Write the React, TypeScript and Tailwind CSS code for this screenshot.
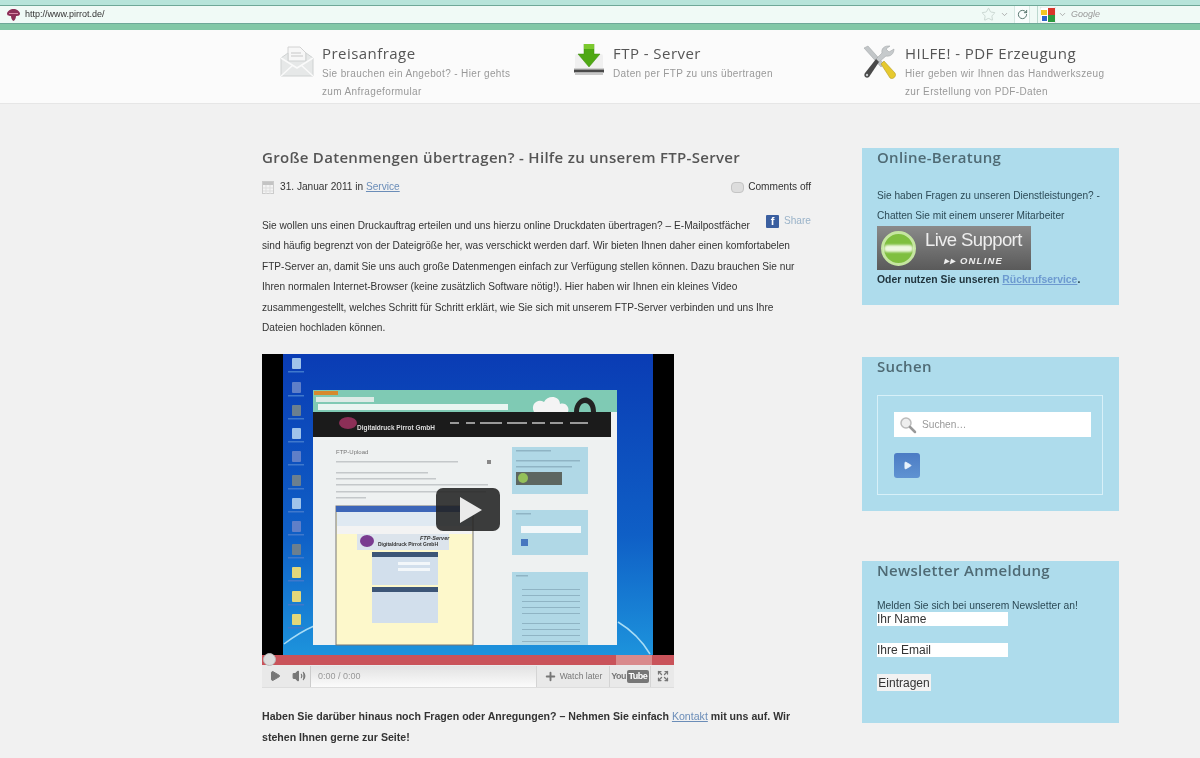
import { Star, RotateCw, ChevronDown, Play, Volume2, Plus, Expand } from "lucide-react";

const arial = "font-['Liberation_Sans',Arial,sans-serif]";
const heading = "font-['Open_Sans','DejaVu_Sans',sans-serif]";

function MailIcon() {
  return (
    <svg width="34" height="34" viewBox="0 0 34 34" className="shrink-0">
      <path d="M8 3h12l6 6v12H8z" fill="#f7f7f7" stroke="#d2d2d2" />
      <path d="M11 9h10M11 12h12" stroke="#d8d8d8" strokeWidth="1.5" />
      <path d="M1 14l7-5v8h18V9l7 5v18H1z" fill="#e6e8e8" stroke="#cfd2d2" />
      <path d="M1 14l16 10 16-10M1 32l12-11M33 32L21 21" fill="none" stroke="#fafafa" strokeWidth="1.5" />
    </svg>
  );
}

function DownloadIcon() {
  return (
    <svg width="32" height="34" viewBox="0 0 32 34" className="shrink-0">
      <rect x="2" y="10" width="28" height="20" rx="2" fill="#f0f0f0" />
      <path d="M11 0h10v10h6L16 23 5 10h6z" fill="#4fa814" stroke="#3d8a0c" strokeWidth=".5" />
      <path d="M11 0h10v5H11z" fill="#7cc92e" />
      <rect x="1" y="24" width="30" height="1.5" fill="#cfcfcf" />
      <rect x="1" y="25.5" width="30" height="3" fill="#4a4a4a" />
      <rect x="2" y="28.5" width="28" height="2.5" fill="#c8c8c8" />
    </svg>
  );
}

function ToolsIcon() {
  return (
    <svg width="34" height="36" viewBox="2 0 34 36" className="shrink-0">
      <path d="M3 4l4-2 16 18-3 3z" fill="#c2c6c8" stroke="#9a9ea0" strokeWidth=".5" />
      <path d="M20 20l3-3 11 12c2 3-2 7-5 5z" fill="#e6c92f" stroke="#a8901a" strokeWidth=".5" />
      <path d="M27 2c-4 0-7 3-6 7L15 15l3 3 7-6c4 1 8-2 8-7l-5 3-3-3 4-3z" fill="#c6cacc" stroke="#9a9ea0" strokeWidth=".5" />
      <path d="M15 15l3 3L8 33c-3 2-6-1-4-4z" fill="#4a4a4a" />
      <circle cx="6" cy="31" r="1.2" fill="#c6cacc" />
    </svg>
  );
}

function Favicon() {
  return (
    <svg width="15" height="14" viewBox="0 0 15 14" className="shrink-0">
      <path d="M7.5 1c3 0 6 2 6.5 4.500C14 8 11 8 10 8c0 2-1 4.500-2.500 5C6 12.500 5 10 5 8 4 8 1 8 1 5.500 1.500 3 4.500 1 7.500 1z" fill="#8c2f57" />
      <path d="M3 5.500h9" stroke="#d88aa8" />
    </svg>
  );
}

function GoogleIcon() {
  return (
    <svg width="16" height="16" viewBox="0 0 16 16" className="shrink-0">
      <rect width="16" height="16" rx="2" fill="#fff" stroke="#ccc" strokeWidth=".5" />
      <rect x="1" y="3" width="6" height="5" fill="#f3c623" />
      <rect x="8" y="1" width="7" height="7" fill="#d9352a" />
      <rect x="8" y="8" width="7" height="7" fill="#2c9a3f" />
      <rect x="2" y="9" width="5" height="5" fill="#2f64c9" />
    </svg>
  );
}

function BrowserBar() {
  return (
    <div className="h-[30px] bg-[#b7e4da]">
      <div className="h-[5px]" />
      <div className="flex h-[19px] items-center border-y border-[#6fa898] bg-[#f0faf6] pl-[6px] pr-[8px]">
        <Favicon />
        <span className={`ml-[4px] text-[9px] text-[#333] ${arial}`}>http://www.pirrot.de/</span>
        <div className="ml-auto flex h-full items-center">
          <Star size={15} strokeWidth={1} className="text-[#b5c4be]" />
          <ChevronDown size={9} className="ml-[4px] text-[#999]" />
          <div className="ml-[5px] flex h-full w-[16px] items-center justify-center border-x border-[#d6e8e2] bg-[#f9fdfc]">
            <RotateCw size={11} className="text-[#4c6c64]" />
          </div>
          <div className="ml-[7px] flex h-full w-[155px] items-center border-l border-[#bcd8cf]">
            <span className="ml-[2px]"><GoogleIcon /></span>
            <ChevronDown size={9} className="ml-[2px] text-[#999]" />
            <span className={`ml-[4px] text-[9px] italic text-[#999] ${arial}`}>Google</span>
          </div>
        </div>
      </div>
      <div className="h-[6px] bg-[#82c7a6]" />
    </div>
  );
}

function TopItem({ icon, title, lines, width }: { icon: React.ReactNode; title: string; lines: string[]; width: string }) {
  return (
    <div className={`flex items-start gap-[8px] ${width}`}>
      <div className="mt-[14px]">{icon}</div>
      <div className="pt-[12px]">
        <div className={`mb-[1px] text-[15px] font-medium leading-[22px] tracking-[0.45px] text-[#555] ${heading}`}>{title}</div>
        {lines.map((l) => (
          <div key={l} className={`text-[10px] leading-[18px] tracking-[0.36px] text-[#999] ${arial}`}>{l}</div>
        ))}
      </div>
    </div>
  );
}

function VideoFrame() {
  const icons = [10, 34, 57, 80, 103, 127, 150, 173, 196, 219, 243, 266];
  return (
    <svg width="412" height="301" viewBox="0 0 412 301" className="block blur-[0.5px]">
      <defs>
        <linearGradient id="desk" x1="0" y1="0" x2="0" y2="1">
          <stop offset="0" stopColor="#0a3cb4" />
          <stop offset="0.6" stopColor="#0f5fc6" />
          <stop offset="1" stopColor="#1d93dc" />
        </linearGradient>
      </defs>
      <rect width="412" height="301" fill="#000" />
      <rect x="21" width="370" height="301" fill="url(#desk)" />
      <path d="M22 290 Q38 278 52 272M356 268 Q376 280 388 300" stroke="#a8dcf5" strokeWidth="1.5" fill="none" />
      {icons.map((y, i) => (
        <g key={y}>
          <rect x="30" y={y - 6} width="9" height="11" rx="1" fill={i > 8 ? "#e3d77a" : i % 3 === 0 ? "#9fc3ea" : i % 3 === 1 ? "#5f7fc8" : "#6b7f8f"} />
          <rect x="26" y={y + 7} width="16" height="1.5" fill="#3f78cc" />
        </g>
      ))}
      <rect x="51" y="36" width="304" height="255" fill="#eef1f1" />
      <rect x="51" y="36" width="304" height="22" fill="#7fcab4" />
      <rect x="52" y="37" width="24" height="4" fill="#d68a2e" />
      <rect x="54" y="43" width="58" height="5" fill="#dcebe6" />
      <rect x="56" y="50" width="190" height="6" fill="#e9f5f1" />
      <path d="M272 58c-4-8 4-14 10-10 4-8 16-6 16 2 6-2 10 4 8 8z" fill="#f4f4f4" />
      <path d="M312 58c0-10 8-16 14-14 6 2 8 8 8 14h-5c0-6-3-9-6-9-4 0-6 4-6 9z" fill="#222" />
      <rect x="51" y="58" width="298" height="25" fill="#1b1b1b" />
      <ellipse cx="86" cy="69" rx="9" ry="6" fill="#8c2f57" />
      <text x="95" y="76" fontSize="6.5" fontWeight="700" fill="#ddd" fontFamily="Liberation Sans, sans-serif">Digitaldruck Pirrot GmbH</text>
      <g fill="#999">
        {[188, 204, 218, 245, 270, 288, 308].map((x, i) => (
          <rect key={x} x={x} y="68" width={[9, 9, 22, 20, 13, 13, 18][i]} height="2" />
        ))}
      </g>
      <text x="74" y="100" fontSize="6" fill="#777" fontFamily="Liberation Sans, sans-serif">FTP-Upload</text>
      <g fill="#c4c8ca">
        <rect x="74" y="107" width="122" height="1.5" />
        <rect x="74" y="118" width="92" height="1.5" />
        <rect x="74" y="124" width="100" height="1.5" />
        <rect x="74" y="130" width="152" height="1.5" />
        <rect x="74" y="137" width="150" height="1.5" />
        <rect x="74" y="143" width="30" height="1.5" />
      </g>
      <rect x="225" y="106" width="4" height="4" fill="#888" />
      <rect x="74" y="152" width="137" height="139" fill="#fdf8cb" stroke="#777" />
      <rect x="74" y="152" width="137" height="6" fill="#3d66b8" />
      <rect x="75" y="158" width="135" height="14" fill="#dfe9f2" />
      <rect x="75" y="172" width="135" height="8" fill="#f3f3f3" />
      <rect x="95" y="180" width="92" height="16" fill="#dce4ec" />
      <ellipse cx="105" cy="187" rx="7" ry="6" fill="#7a3c90" />
      <text x="116" y="192" fontSize="5" fontWeight="700" fill="#333" fontFamily="Liberation Sans, sans-serif">Digitaldruck Pirrot GmbH</text>
      <text x="158" y="186" fontSize="5.5" fontWeight="700" fontStyle="italic" fill="#333" fontFamily="Liberation Sans, sans-serif">FTP-Server</text>
      <rect x="110" y="198" width="66" height="33" fill="#d2dfec" />
      <rect x="110" y="198" width="66" height="5" fill="#3c5577" />
      <rect x="136" y="208" width="32" height="3" fill="#f3f7fa" />
      <rect x="136" y="214" width="32" height="3" fill="#f3f7fa" />
      <rect x="110" y="233" width="66" height="36" fill="#d2dfec" />
      <rect x="110" y="233" width="66" height="5" fill="#3c5577" />
      <rect x="250" y="93" width="76" height="47" fill="#b0d8e6" />
      <rect x="250" y="156" width="76" height="45" fill="#b0d8e6" />
      <rect x="250" y="218" width="76" height="73" fill="#b0d8e6" />
      <rect x="254" y="118" width="46" height="13" fill="#5d6660" />
      <circle cx="261" cy="124" r="5" fill="#94c05a" />
      <rect x="259" y="172" width="60" height="7" fill="#f2f7f9" />
      <rect x="259" y="185" width="7" height="7" fill="#4777bf" />
      <g fill="#8fb4c4">
        <rect x="254" y="96" width="35" height="1.5" />
        <rect x="254" y="106" width="64" height="1.5" />
        <rect x="254" y="112" width="56" height="1.5" />
        <rect x="254" y="159" width="15" height="1.5" />
        <rect x="254" y="221" width="12" height="1.5" />
        {[235, 241, 247, 253, 259, 269, 275, 281, 287].map((y) => (
          <rect key={y} x="260" y={y} width="58" height="1" />
        ))}
      </g>
      <rect x="174" y="134" width="64" height="43" rx="7" fill="#222" fillOpacity="0.88" />
      <path d="M198 143l22 13-22 13z" fill="#eaeaea" />
    </svg>
  );
}

function VideoPlayer() {
  return (
    <div className={`relative w-[412px] ${arial}`}>
      <VideoFrame />
      <div className="flex h-[10px] justify-end bg-[#c9535a]">
        <div className="mr-[22px] w-[36px] bg-[#d98a8c]" />
      </div>
      <div className="absolute left-[1px] top-[299px] h-[13px] w-[13px] rounded-full border border-[#bbb] bg-[#dcdcdc]" />
      <div className="flex h-[23px] items-stretch border-b border-[#ddd] bg-[#e9e9e9] pt-[1px] text-[8.500px] leading-[13px] text-[#777]">
        <div className="flex w-[25px] items-center justify-center"><Play size={12} fill="#777" className="text-[#777]" /></div>
        <div className="flex w-[24px] items-center justify-center border-r border-[#ccc]"><Volume2 size={14} fill="#777" className="text-[#777]" /></div>
        <div className="flex flex-1 items-center bg-gradient-to-b from-[#e2e2e2] to-[#fbfbfb] pl-[7px] text-[9px] text-[#999]">0:00 / 0:00</div>
        <div className="flex w-[74px] items-center justify-center gap-[3px] border-x border-[#d4d4d4]"><Plus size={13} strokeWidth={3.5} className="text-[#777]" />Watch later</div>
        <div className="flex w-[40px] items-center justify-center text-[9px] font-bold tracking-[-0.5px]">You<span className="ml-[1px] rounded-[2px] bg-[#777] px-[1.500px] text-white">Tube</span></div>
        <div className="flex w-[24px] items-center justify-center border-l border-[#d4d4d4]"><Expand size={12} strokeWidth={2.5} className="text-[#777]" /></div>
      </div>
    </div>
  );
}

function Article() {
  return (
    <div className={`w-[550px] text-[10.130px] leading-[20.600px] text-[#333] ${arial}`}>
      <h1 className={`text-[15px] font-semibold leading-[20px] tracking-[0.3px] text-[#555] ${heading}`}>Große Datenmengen übertragen? - Hilfe zu unserem FTP-Server</h1>
      <div className="mt-[10px] flex h-[20px] items-center justify-between">
        <div className="flex items-center">
          <svg width="12" height="13" viewBox="0 0 12 13" className="mr-[6px]">
            <rect x=".5" y=".5" width="11" height="12" fill="#f4f4f4" stroke="#ccc" />
            <rect x="1" y="1" width="10" height="3" fill="#c4c4c4" />
            <path d="M1 7h10M1 10h10M4 4v9M8 4v9" stroke="#ddd" />
          </svg>
          <span>31. Januar 2011 in <a className="text-[#6b8db8] underline">Service</a></span>
        </div>
        <div className="flex items-center pr-[1px]">
          <span className="mr-[4px] h-[11px] w-[13px] rounded-[4px] border border-[#c4c4c4] bg-[#ddd]" />
          Comments off
        </div>
      </div>
      <div className="mt-[18.500px]">
        <div className="float-right -mt-[1px] ml-[12px] flex h-[14px] items-center pr-[1px] text-[#9ab3c9]">
          <span className="mr-[5px] flex h-[13px] w-[13px] items-center justify-center rounded-[1px] bg-[#3b5fa0] text-[11px] font-bold leading-none text-white">f</span>
          Share
        </div>
        <p>
          Sie wollen uns einen Druckauftrag erteilen und uns hierzu online Druckdaten übertragen? – E-Mailpostfächer<br />
          sind häufig begrenzt von der Dateigröße her, was verschickt werden darf. Wir bieten Ihnen daher einen komfortabelen<br />
          FTP-Server an, damit Sie uns auch große Datenmengen einfach zur Verfügung stellen können. Dazu brauchen Sie nur<br />
          Ihren normalen Internet-Browser (keine zusätzlich Software nötig!). Hier haben wir Ihnen ein kleines Video<br />
          zusammengestellt, welches Schritt für Schritt erklärt, wie Sie sich mit unserem FTP-Server verbinden und uns Ihre<br />
          Dateien hochladen können.
        </p>
      </div>
      <div className="mt-[14.500px]"><VideoPlayer /></div>
      <p className="mt-[18.500px] text-[10.600px] font-bold">
        Haben Sie darüber hinaus noch Fragen oder Anregungen? – Nehmen Sie einfach <a className="font-normal text-[#6b8db8] underline">Kontakt</a> mit uns auf. Wir<br />
        stehen Ihnen gerne zur Seite!
      </p>
    </div>
  );
}

function Box({ title, height, children }: { title: string; height: string; children: React.ReactNode }) {
  return (
    <div className={`w-[257px] bg-[#aedcec] px-[15px] ${height} ${arial}`}>
      <h3 className={`h-[20px] text-[15px] font-semibold leading-[18px] tracking-[0.3px] text-[#4f6a74] ${heading}`}>{title}</h3>
      {children}
    </div>
  );
}

function LiveSupport() {
  return (
    <div className="flex h-[44px] w-[154px] bg-gradient-to-b from-[#8a8a8a] to-[#5a5a5a]">
      <div className="ml-[4px] mt-[5px] flex h-[35px] w-[35px] items-center justify-center rounded-full border-[3px] border-[#c5e6a0] bg-[#7fbf3f]">
        <div className="h-[7px] w-full rounded-full bg-[#eef7e0] blur-[1px]" />
      </div>
      <div className="ml-[9px] flex flex-col items-center">
        <span className="text-[18.500px] leading-[28px] tracking-[-0.6px] text-[#eee]">Live Support</span>
        <span className="text-[9.500px] font-bold italic leading-[13px] tracking-[1.2px] text-[#eee]">▸▸ ONLINE</span>
      </div>
    </div>
  );
}

function Sidebar() {
  return (
    <div className="flex flex-col text-[10.130px] text-[#2c4a56]">
      <Box title="Online-Beratung" height="h-[157px]">
        <p className="mt-[18px] leading-[20px]">Sie haben Fragen zu unseren Dienstleistungen? -<br />Chatten Sie mit einem unserer Mitarbeiter</p>
        <LiveSupport />
        <p className="mt-[2px] text-[10.400px] font-bold leading-[16px] text-[#22363f]">Oder nutzen Sie unseren <a className="text-[#6d9ad0] underline">Rückrufservice</a>.</p>
      </Box>
      <div className="mt-[52px]">
        <Box title="Suchen" height="h-[154px]">
          <div className="mt-[18px] h-[100px] w-[226px] border border-[#d8f0f8] pl-[16px] pt-[16px]">
            <div className="flex h-[25px] w-[197px] items-center bg-white pl-[5px] text-[#999]">
              <svg width="18" height="18" viewBox="0 0 18 18" className="mr-[5px]">
                <circle cx="7" cy="7" r="5" fill="#eee" stroke="#bbb" strokeWidth="1.5" />
                <path d="M11 11l5 5" stroke="#999" strokeWidth="2.5" strokeLinecap="round" />
              </svg>
              Suchen…
            </div>
            <div className="mt-[16px] flex h-[25px] w-[26px] items-center justify-center rounded-[3px] bg-gradient-to-b from-[#4c7cc4] to-[#5f93d2]">
              <Play size={9} fill="#e8f2fb" className="text-[#e8f2fb]" />
            </div>
          </div>
        </Box>
      </div>
      <div className="mt-[50px]">
        <Box title="Newsletter Anmeldung" height="h-[162px]">
          <p className="mt-[18px] text-[10.300px] leading-[13px]">Melden Sie sich bei unserem Newsletter an!</p>
          <div className="h-[14px] w-[131px] bg-white text-[12px] leading-[14px] text-[#333]">Ihr Name</div>
          <div className="mt-[17px] h-[14px] w-[131px] bg-white text-[12px] leading-[14px] text-[#333]">Ihre Email</div>
          <div className="mt-[17px] flex h-[17px] w-[54px] items-center justify-center bg-[#f2f2f2] text-[12px] text-[#333]">Eintragen</div>
        </Box>
      </div>
    </div>
  );
}

export default function App() {
  return (
    <div className="h-[758px] overflow-hidden bg-[#f1f1f1] blur-[0.3px]">
      <BrowserBar />
      <div className="flex h-[74px] border-b border-[#e6e6e6] bg-[#fbfbfb] pl-[280px]">
        <TopItem icon={<MailIcon />} title="Preisanfrage" lines={["Sie brauchen ein Angebot? - Hier gehts", "zum Anfrageformular"]} width="w-[293px]" />
        <TopItem icon={<DownloadIcon />} title="FTP - Server" lines={["Daten per FTP zu uns übertragen"]} width="w-[290px]" />
        <TopItem icon={<ToolsIcon />} title="HILFE! - PDF Erzeugung" lines={["Hier geben wir Ihnen das Handwerkszeug", "zur Erstellung von PDF-Daten"]} width="w-[300px]" />
      </div>
      <div className="flex gap-[50px] pl-[262px] pt-[44px]">
        <div className="-mt-[1px]"><Article /></div>
        <Sidebar />
      </div>
    </div>
  );
}
